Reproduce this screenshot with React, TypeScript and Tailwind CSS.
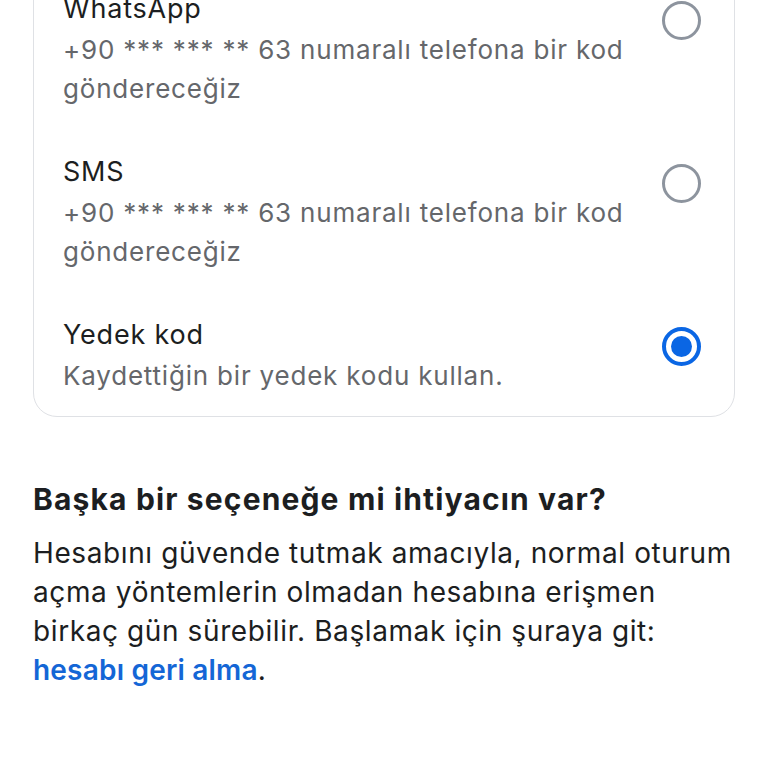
import { useState } from "react";

type Option = {
  id: string;
  title: string;
  desc: string;
};

const options: Option[] = [
  { id: "whatsapp", title: "WhatsApp", desc: "+90 *** *** ** 63 numaralı telefona bir kod göndereceğiz" },
  { id: "sms", title: "SMS", desc: "+90 *** *** ** 63 numaralı telefona bir kod göndereceğiz" },
  { id: "backup", title: "Yedek kod", desc: "Kaydettiğin bir yedek kodu kullan." },
];

function Radio({ checked }: { checked: boolean }) {
  if (checked) {
    return (
      <span className="flex h-[39px] w-[39px] items-center justify-center rounded-full border-[4px] border-[#0a66e4]">
        <span className="h-[21px] w-[21px] rounded-full bg-[#0a66e4]" />
      </span>
    );
  }
  return <span className="block h-[39px] w-[39px] rounded-full border-[3px] border-[#8d949e]" />;
}

export default function App() {
  const [selected, setSelected] = useState("backup");

  return (
    <div className="min-h-[768px] bg-white px-[33px] font-['Inter',sans-serif]">
      <div className="-mt-[35px] rounded-[24px] border border-[#dfe1e5] bg-white">
        {options.map((o) => (
          <button
            key={o.id}
            type="button"
            onClick={() => setSelected(o.id)}
            className="flex w-full items-start justify-between gap-4 pl-[29px] pr-[33px] pt-[22px] pb-[21px] text-left"
          >
            <div className="max-w-[580px] tracking-[0.8px]">
              <div className="text-[27px] leading-[42px] text-[#1c1e21]">{o.title}</div>
              <div className="text-[26px] leading-[39px] text-[#65676b]">{o.desc}</div>
            </div>
            <span className="mt-[13px] flex shrink-0">
              <Radio checked={selected === o.id} />
            </span>
          </button>
        ))}
      </div>

      <h2 className="mt-[64px] text-[30px] font-bold leading-[36px] tracking-[1.15px] text-[#1c1e21]">
        Başka bir seçeneğe mi ihtiyacın var?
      </h2>
      <p className="mt-[17px] text-[28px] leading-[39px] tracking-[0.6px] text-[#1c1e21]">
        Hesabını güvende tutmak amacıyla, normal oturum açma yöntemlerin olmadan hesabına erişmen birkaç gün
        sürebilir. Başlamak için şuraya git:{" "}
        <a href="#" className="font-semibold tracking-[0.2px] text-[#1466d6]">
          hesabı geri alma
        </a>
        .
      </p>
    </div>
  );
}
